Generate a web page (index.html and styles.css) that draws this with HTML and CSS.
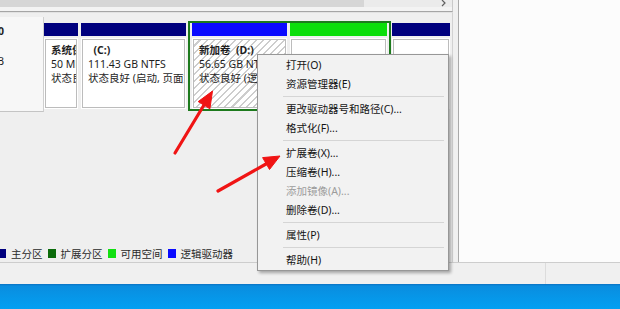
FILE: index.html
```html
<!DOCTYPE html>
<html lang="zh-CN">
<head>
<meta charset="utf-8">
<title>磁盘管理</title>
<link rel="stylesheet" href="styles.css">
</head>
<body>
<div class="screen">
  <div class="window">
    <div class="main">
      <div class="listpane">
        <div class="hscroll">
          <div class="thumb"></div>
          <div class="track"></div>
          <div class="sarrow"><svg width="8" height="7" viewBox="0 0 8 7"><path d="M2 0 L5 3 L2 6" fill="none" stroke="#606060" stroke-width="1.2"/></svg></div>
        </div>
      </div>
      <div class="lower">
        <div class="disk-row">
          <div class="disk-label">
            <div class="dl-text">
              <div class="dl-line bold">磁盘 0</div>
              <div class="dl-line">&nbsp;</div>
              <div class="dl-line">238.47 GB</div>
            </div>
          </div>
          <div class="parts">
            <div class="part primary p-sys">
              <div class="bar"></div>
              <div class="body"><div class="inner">
                <div class="bold">系统保留</div>
                <div>50 MB NTFS</div>
                <div>状态良好 (系统, 活动, 主分区)</div>
              </div></div>
            </div>
            <div class="part primary p-c">
              <div class="bar"></div>
              <div class="body"><div class="inner">
                <div class="bold">&nbsp;&nbsp;(C:)</div>
                <div>111.43 GB NTFS</div>
                <div>状态良好 (启动, 页面文件, 故障转储, 主分区)</div>
              </div></div>
            </div>
            <div class="ext">
              <div class="part logical p-d">
                <div class="bar"></div>
                <div class="body"><div class="inner hatch">
                  <div class="bold">新加卷&nbsp;&nbsp;(D:)</div>
                  <div>56.65 GB NTFS</div>
                  <div>状态良好 (逻辑驱动器)</div>
                </div></div>
              </div>
              <div class="part free p-free">
                <div class="bar"></div>
                <div class="body"><div class="inner"></div></div>
              </div>
            </div>
            <div class="part primary p-last">
              <div class="bar"></div>
              <div class="body"><div class="inner"></div></div>
            </div>
          </div>
        </div>
        <div class="spacer"></div>
        <div class="legend">
          <span class="sq sq-primary first"></span><span class="lg-text">主分区</span>
          <span class="sq sq-ext"></span><span class="lg-text">扩展分区</span>
          <span class="sq sq-free"></span><span class="lg-text">可用空间</span>
          <span class="sq sq-logical"></span><span class="lg-text">逻辑驱动器</span>
        </div>
      </div>
    </div>
    <div class="side"></div>
  </div>
  <div class="statusbar">
    <div class="sb-cell"></div>
    <div class="sb-cell2"></div>
  </div>
  <div class="taskbar"></div>

  <div class="menu">
    <div class="item">打开(O)</div>
    <div class="item">资源管理器(E)</div>
    <div class="sep"></div>
    <div class="item">更改驱动器号和路径(C)...</div>
    <div class="item">格式化(F)...</div>
    <div class="sep"></div>
    <div class="item">扩展卷(X)...</div>
    <div class="item">压缩卷(H)...</div>
    <div class="item disabled">添加镜像(A)...</div>
    <div class="item">删除卷(D)...</div>
    <div class="sep"></div>
    <div class="item">属性(P)</div>
    <div class="sep"></div>
    <div class="item">帮助(H)</div>
  </div>

  <svg class="annot" width="620" height="309" viewBox="0 0 620 309">
    <g fill="#f01414" stroke="#f01414" stroke-linejoin="round">
      <line x1="175" y1="153" x2="204" y2="105" stroke-width="3.2" stroke-linecap="round"/>
      <polygon points="212.5,91 209.9,108.8 198.2,101.6" stroke-width="1"/>
      <line x1="218" y1="191" x2="266" y2="164" stroke-width="3.2" stroke-linecap="round"/>
      <polygon points="280,156 269.5,169.5 262.6,157.6" stroke-width="1"/>
    </g>
  </svg>
</div>
</body>
</html>
```

FILE: styles.css
```css
* { box-sizing: border-box; margin: 0; padding: 0; }

html, body {
  width: 620px;
  height: 309px;
  overflow: hidden;
}

body {
  font-family: "Noto Sans", "Noto Sans CJK SC", sans-serif;
  font-size: 10.5px;
  color: #1e1e1e;
  background: #f0f0f0;
}

.screen {
  position: relative;
  width: 620px;
  height: 309px;
  display: flex;
  flex-direction: column;
}

.window {
  display: flex;
  height: 262px;
}

.main {
  width: 459px;
  border-right: 1px solid #a9a9a9;
  display: flex;
  flex-direction: column;
  background: #f0f0f0;
}

.side {
  flex: 1;
  background: #fcfcfc;
}

/* upper list pane bottom (horizontal scrollbar) */
.listpane {
  width: 453px;
  height: 12px;
  border-bottom: 1px solid #a5a5a5;
  border-right: 1px solid #c9c9c9;
  background: #f3f3f3;
}

.hscroll {
  display: flex;
  height: 7px;
}

.hscroll .thumb {
  width: 364px;
  background: #d6d6d6;
}

.hscroll .track {
  flex: 1;
  background: #ebebeb;
}

.hscroll .sarrow {
  width: 12px;
  background: #ebebeb;
  display: flex;
  align-items: flex-start;
  line-height: 0;
}

/* lower graphical pane */
.lower {
  flex: 1;
  width: 453px;
  border-top: 1px solid #e2e2e2;
  border-right: 1px solid #d2d2d2;
  background: #efefef;
  display: flex;
  flex-direction: column;
}

.disk-row {
  display: flex;
  height: 95px;
  margin-top: 4px;
}

.disk-label {
  width: 44px;
  height: 95px;
  background: #f7f7f7;
  border-right: 1px solid #cfcfcf;
  border-bottom: 1px solid #c4c4c4;
  overflow: hidden;
  padding-top: 7px;
}

.dl-text {
  width: 104px;
  margin-left: -100px;
  text-align: right;
  line-height: 15px;
  white-space: nowrap;
}

.bold { font-weight: bold; }

.parts {
  display: flex;
  align-items: flex-start;
  padding-top: 4px;
}

.part {
  display: flex;
  flex-direction: column;
  height: 86px;
}

.primary { margin-top: 2px; }

.bar { height: 13px; }

.primary .bar { background: #00007e; }
.logical .bar { background: #0a0aff; }
.free .bar { background: #0ade0a; }

.body {
  margin-top: 2px;
  height: 71px;
  background: #ffffff;
  padding: 1px;
}

.inner {
  height: 100%;
  border: 1px solid #bcbcbc;
  padding: 3px 5px;
  line-height: 14px;
  white-space: nowrap;
  overflow: hidden;
}

.hatch {
  background: repeating-linear-gradient(135deg, #ffffff 0 3.5px, #cdcdcd 3.5px 5px);
}

.p-sys { width: 34px; }
.p-c { width: 105px; margin-left: 3px; }
.p-last { width: 58px; margin-left: 1px; }

.ext {
  display: flex;
  height: 90px;
  margin-left: 2px;
  border: 2px solid #1d7a1d;
  padding: 0 2px;
}

.p-d { width: 95px; }
.p-free { width: 97px; margin-left: 3px; }

.spacer { flex: 1; }

.legend {
  height: 17px;
  display: flex;
  align-items: center;
  color: #2a2a2a;
  white-space: nowrap;
}

.sq {
  width: 8px;
  height: 9px;
  margin-left: 5px;
  margin-right: 5px;
}

.sq.first { margin-left: -2px; }
.sq-primary { background: #00007e; }
.sq-ext { background: #0b6b0b; }
.sq-free { background: #12e012; }
.sq-logical { background: #0a0aff; }

/* status bar & taskbar */
.statusbar {
  height: 22px;
  border-top: 1px solid #cdcdcd;
  background: #f0f0f0;
  display: flex;
}

.sb-cell {
  width: 546px;
  border-right: 1px solid #dcdcdc;
}

.sb-cell2 { flex: 1; }

.taskbar {
  height: 25px;
  background: linear-gradient(180deg, #0a72c2 0, #0a8ddf 2px, #03a0f2 100%);
}

/* context menu */
.menu {
  position: absolute;
  left: 257px;
  top: 54px;
  width: 192px;
  background: #f2f2f2;
  border: 1px solid #979797;
  box-shadow: 2px 2px 3px rgba(0, 0, 0, 0.32);
  padding-top: 1px;
  color: #141414;
}

.item {
  height: 19px;
  line-height: 19px;
  padding-left: 28px;
  white-space: nowrap;
}

.item.disabled { color: #9c9c9c; }

.sep {
  height: 1px;
  background: #d5d5d5;
  margin: 2px 4px 3px 25px;
}

.annot {
  position: absolute;
  left: 0;
  top: 0;
  pointer-events: none;
}
```
